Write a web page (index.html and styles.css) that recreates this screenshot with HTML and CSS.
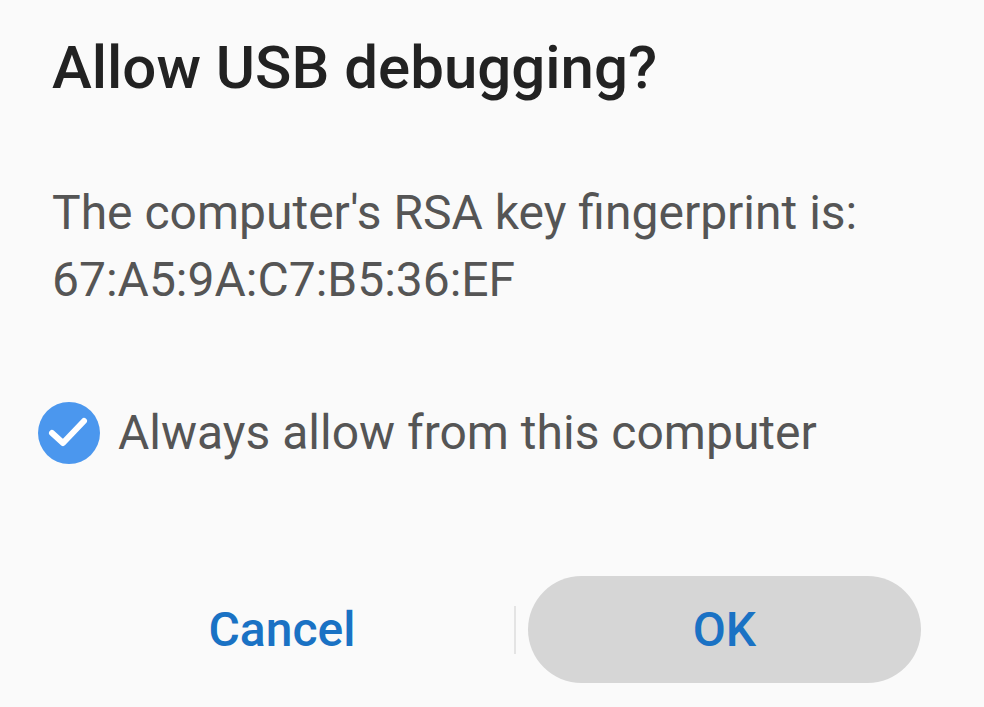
FILE: index.html
```html
<!DOCTYPE html>
<html lang="en">
<head>
    <meta charset="UTF-8">
    <meta name="viewport" content="width=device-width, initial-scale=1.0">
    <title>Allow USB debugging?</title>
    <link rel="stylesheet" href="styles.css">
</head>
<body>
    <div class="dialog">
        <div class="dialog-title">Allow USB debugging?</div>
        <div class="dialog-message">
            The computer's RSA key fingerprint is:<br>
            67:A5:9A:C7:B5:36:EF
        </div>
        <!-- Remember checkbox -->
        <label class="check-row">
            <span class="check-circle">
                <svg width="62" height="62" viewBox="0 0 62 62">
                    <circle cx="31" cy="31" r="31" fill="#4b97ee"/>
                    <path d="M14 31 L25 41 L46 19" fill="none" stroke="#fff" stroke-width="6" stroke-linecap="round" stroke-linejoin="round"/>
                </svg>
            </span>
            <span class="check-label">Always allow from this computer</span>
        </label>
        <div class="buttons">
            <button class="btn cancel">Cancel</button>
            <div class="divider"></div>
            <button class="btn ok">OK</button>
        </div>
    </div>
</body>
</html>
```

FILE: styles.css
```css
body {
    margin: 0;
    padding: 0;
    background: #fafafa;
    font-family: Roboto, 'Noto Sans', Arial, sans-serif;
    width: 984px;
    height: 707px;
    overflow: hidden;
}
.dialog {
    display: flex;
    flex-direction: column;
    padding-top: 33px;
}
.dialog-title {
    padding-left: 52px;
    font-size: 60px;
    line-height: 70px;
    font-weight: 500;
    color: #222222;
}
.dialog-message {
    margin-top: 76px;
    padding-left: 52px;
    font-size: 48px;
    line-height: 67px;
    color: #555555;
}
.check-row {
    margin-top: 89px;
    padding-left: 38px;
    display: flex;
    align-items: center;
    gap: 18px;
}
.check-circle {
    display: flex;
    width: 62px;
    height: 62px;
}
.check-label {
    font-size: 48px;
    line-height: 62px;
    color: #555555;
}
.buttons {
    margin-top: 112px;
    padding-left: 50px;
    display: flex;
    align-items: center;
}
.btn {
    border: none;
    background: none;
    padding: 0;
    font-family: inherit;
    font-size: 48px;
    font-weight: 500;
    color: #1a72c4;
    height: 107px;
    cursor: pointer;
}
.cancel {
    width: 464px;
}
.divider {
    width: 2px;
    height: 48px;
    background: #e4e4e4;
    margin-right: 12px;
}
.ok {
    width: 393px;
    background: #d6d6d6;
    border-radius: 54px;
}
```
